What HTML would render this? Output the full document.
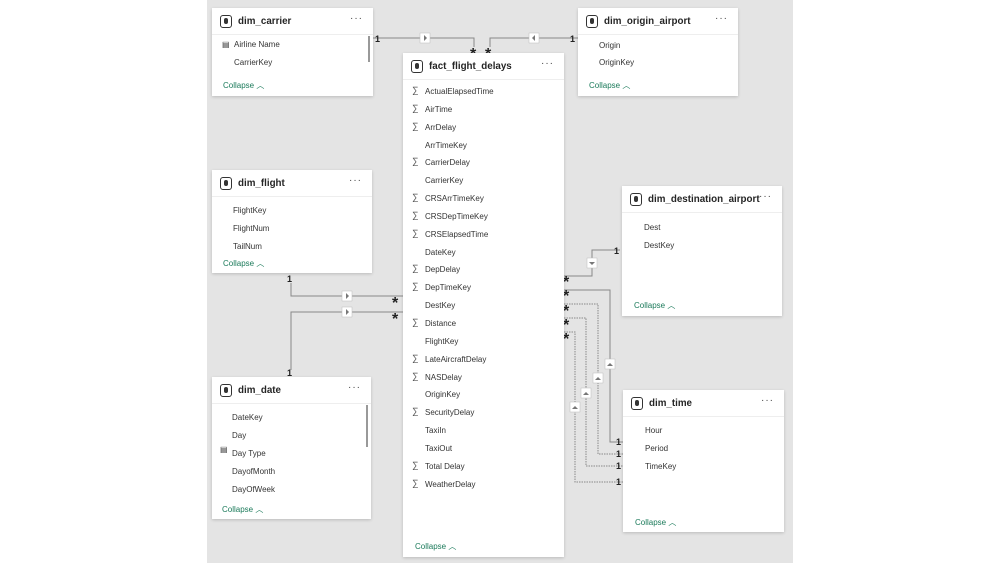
<html><head><style>
body{margin:0;width:1000px;height:563px;background:#fff;position:relative;overflow:hidden;font-family:"Liberation Sans",sans-serif}
#cv{position:absolute;left:207px;top:0;width:586px;height:563px;background:#e4e4e4}
.card{position:absolute;background:#fff;box-shadow:0 1px 3px rgba(0,0,0,.18)}
.hd{height:26px;border-bottom:1px solid #eee;position:relative}
.ic{position:absolute;left:8px;top:7px;width:10px;height:11px;border:1.3px solid #333;border-radius:3px}
.ic:after{content:"";position:absolute;left:3px;top:2px;width:4px;height:6px;background:#333;border-radius:2px}
.tt{position:absolute;left:26px;top:8px;font-size:9.8px;font-weight:bold;color:#252525}
.dots{position:absolute;right:10px;top:5px;font-size:10px;color:#444;letter-spacing:1px}
.r{position:absolute;font-size:8px;color:#333}
.s{position:absolute;font-size:9px;color:#555}
.col{position:absolute;font-size:8px;color:#1b7a5a}
.sb{position:absolute;width:2px;background:#999}
</style></head><body>
<div id="cv"></div>
<svg style="position:absolute;left:0;top:0" width="1000" height="563">
<g stroke="#888" fill="none" stroke-width="1">
<path d="M373 38H474V47"/><path d="M490 47V38H578"/>
<path d="M291 283V296H403"/><path d="M291 370V312H403"/>
<path d="M564 276H592V250H620"/>
<path d="M564 290H610V442H623"/>
<path d="M564 304H598V454H623" stroke-dasharray="1.5 1"/>
<path d="M564 318H586V466H623" stroke-dasharray="1.5 1"/>
<path d="M564 332H575V482H623" stroke-dasharray="1.5 1"/>
</g>
<g fill="#fff" stroke="#bbb" stroke-width=".5">
<rect x="420" y="33" width="10" height="10"/><rect x="529" y="33" width="10" height="10"/>
<rect x="342" y="291" width="10" height="10"/><rect x="342" y="307" width="10" height="10"/>
<rect x="587" y="258" width="10" height="10"/><rect x="605" y="359" width="10" height="10"/>
<rect x="593" y="373" width="10" height="10"/><rect x="581" y="388" width="10" height="10"/><rect x="570" y="402" width="10" height="10"/>
</g>
<g fill="#777">
<path d="M424 35l3 3-3 3z"/><path d="M535 35l-3 3 3 3z"/><path d="M346 293l3 3-3 3z"/><path d="M346 309l3 3-3 3z"/>
<path d="M589 262h6l-3 3z"/><path d="M607 366h6l-3-3z"/><path d="M595 380h6l-3-3z"/><path d="M583 395h6l-3-3z"/><path d="M572 409h6l-3-3z"/>
</g>
<g font-size="9" font-weight="bold" fill="#222">
<text x="375" y="42">1</text><text x="570" y="42">1</text><text x="287" y="282">1</text><text x="287" y="376">1</text><text x="614" y="254">1</text>
<text x="616" y="445">1</text><text x="616" y="457">1</text><text x="616" y="469">1</text><text x="616" y="485">1</text>
</g>
<g font-size="16" font-weight="bold" fill="#222">
<text x="470" y="59">*</text><text x="485" y="59">*</text><text x="392" y="308">*</text><text x="392" y="324">*</text>
<text x="563" y="287">*</text><text x="563" y="301">*</text><text x="563" y="316">*</text><text x="563" y="330">*</text><text x="563" y="344">*</text>
</g>
</svg>

<div class="card" style="left:212px;top:8px;width:161px;height:88px"><div class="hd"><div class="ic"></div><div class="tt">dim_carrier</div><div class="dots">···</div></div>
<div class="r" style="left:10px;top:32px">▤</div><div class="r" style="left:22px;top:32px">Airline Name</div><div class="r" style="left:22px;top:50px">CarrierKey</div><div class="sb" style="left:156px;top:28px;height:26px"></div><div class="col" style="left:11px;top:72px">Collapse ︿</div></div>

<div class="card" style="left:578px;top:8px;width:160px;height:88px"><div class="hd"><div class="ic"></div><div class="tt">dim_origin_airport</div><div class="dots">···</div></div>
<div class="r" style="left:21px;top:33px">Origin</div><div class="r" style="left:21px;top:50px">OriginKey</div><div class="col" style="left:11px;top:72px">Collapse ︿</div></div>

<div class="card" style="left:403px;top:53px;width:161px;height:504px"><div class="hd"><div class="ic"></div><div class="tt">fact_flight_delays</div><div class="dots">···</div></div>
<div class="s" style="left:9px;top:29px;line-height:17.85px">∑<br>∑<br>∑<br><br>∑<br><br>∑<br>∑<br>∑<br><br>∑<br>∑<br><br>∑<br><br>∑<br>∑<br><br>∑<br><br><br>∑<br>∑</div>
<div class="r" style="left:22px;top:30px;line-height:17.85px">ActualElapsedTime<br>AirTime<br>ArrDelay<br>ArrTimeKey<br>CarrierDelay<br>CarrierKey<br>CRSArrTimeKey<br>CRSDepTimeKey<br>CRSElapsedTime<br>DateKey<br>DepDelay<br>DepTimeKey<br>DestKey<br>Distance<br>FlightKey<br>LateAircraftDelay<br>NASDelay<br>OriginKey<br>SecurityDelay<br>TaxiIn<br>TaxiOut<br>Total Delay<br>WeatherDelay</div>
<div class="col" style="left:12px;top:488px">Collapse ︿</div></div>

<div class="card" style="left:212px;top:170px;width:160px;height:103px"><div class="hd"><div class="ic"></div><div class="tt">dim_flight</div><div class="dots">···</div></div>
<div class="r" style="left:21px;top:32px;line-height:17.8px">FlightKey<br>FlightNum<br>TailNum</div><div class="col" style="left:11px;top:88px">Collapse ︿</div></div>

<div class="card" style="left:622px;top:186px;width:160px;height:130px"><div class="hd"><div class="ic"></div><div class="tt">dim_destination_airport</div><div class="dots">···</div></div>
<div class="r" style="left:22px;top:33px;line-height:17.8px">Dest<br>DestKey</div><div class="col" style="left:12px;top:114px">Collapse ︿</div></div>

<div class="card" style="left:212px;top:377px;width:159px;height:142px"><div class="hd"><div class="ic"></div><div class="tt">dim_date</div><div class="dots">···</div></div>
<div class="r" style="left:20px;top:32px;line-height:18px">DateKey<br>Day<br>Day Type<br>DayofMonth<br>DayOfWeek</div><div class="r" style="left:8px;top:68px">▤</div><div class="sb" style="left:154px;top:28px;height:42px"></div><div class="col" style="left:10px;top:127px">Collapse ︿</div></div>

<div class="card" style="left:623px;top:390px;width:161px;height:142px"><div class="hd"><div class="ic"></div><div class="tt">dim_time</div><div class="dots">···</div></div>
<div class="r" style="left:22px;top:32px;line-height:18px">Hour<br>Period<br>TimeKey</div><div class="col" style="left:12px;top:127px">Collapse ︿</div></div>
</body></html>
